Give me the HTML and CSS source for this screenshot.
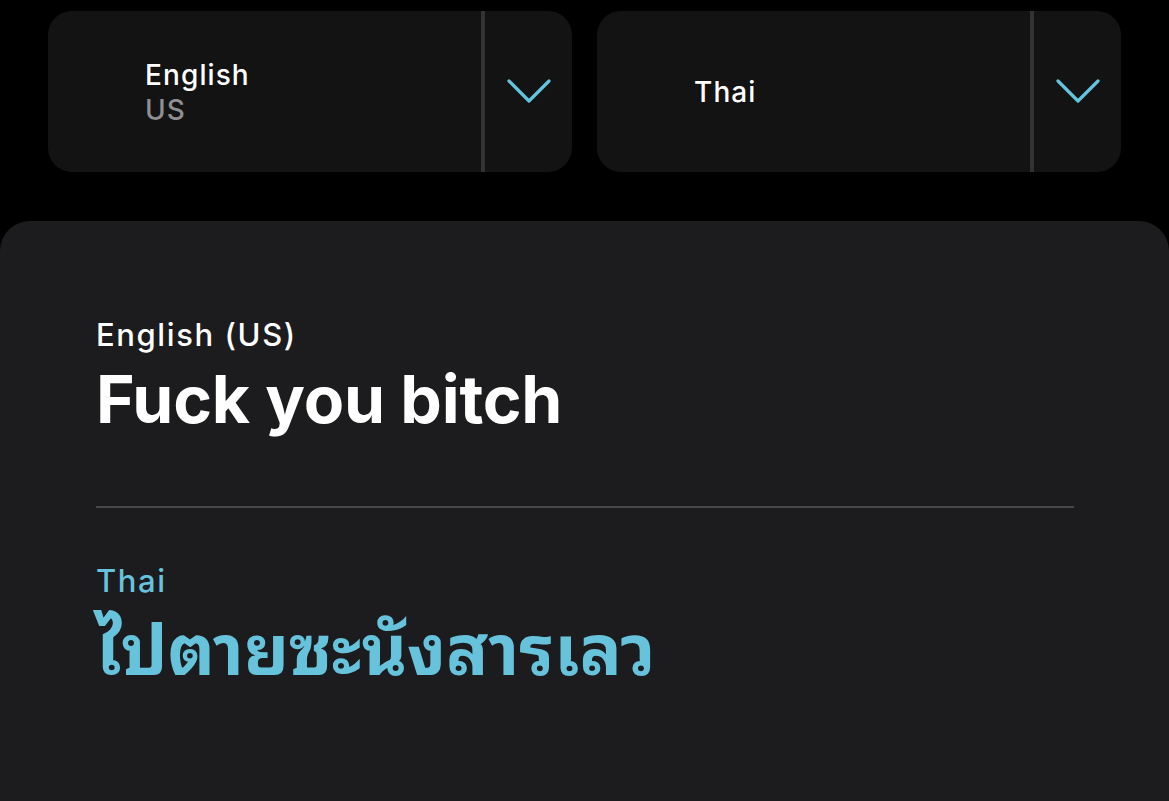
FILE: index.html
```html
<!DOCTYPE html>
<html lang="en">
<head>
<meta charset="utf-8">
<title>Translate</title>
<link rel="stylesheet" href="styles.css">
</head>
<body>
<div class="screen">
  <div class="pickers">
    <div class="picker">
      <div class="picker-label">
        <span class="lang">English</span>
        <span class="region">US</span>
      </div>
      <div class="picker-sep"></div>
      <div class="picker-toggle">
        <svg class="chevron" viewBox="0 0 44 24" width="44" height="24"><path d="M2 2 L22 22 L42 2" fill="none" stroke="currentColor" stroke-width="3.2" stroke-linecap="round" stroke-linejoin="round"/></svg>
      </div>
    </div>
    <div class="picker">
      <div class="picker-label">
        <span class="lang">Thai</span>
      </div>
      <div class="picker-sep"></div>
      <div class="picker-toggle">
        <svg class="chevron" viewBox="0 0 44 24" width="44" height="24"><path d="M2 2 L22 22 L42 2" fill="none" stroke="currentColor" stroke-width="3.2" stroke-linecap="round" stroke-linejoin="round"/></svg>
      </div>
    </div>
  </div>

  <div class="card">
    <div class="block source">
      <div class="block-lang">English (US)</div>
      <div class="block-text">Fuck you bitch</div>
    </div>
    <hr class="rule">
    <div class="block target">
      <div class="block-lang">Thai</div>
      <div class="block-text thai" lang="th">ไปตายซะนังสารเลว</div>
    </div>
  </div>
</div>
</body>
</html>
```
FILE: styles.css
```css
html, body {
  margin: 0;
  padding: 0;
  background: #000;
  height: 100%;
  overflow: hidden;
}

body {
  font-family: Inter, "Noto Sans", sans-serif;
  color: #fff;
}

.screen {
  display: flex;
  flex-direction: column;
  height: 100%;
}

.pickers {
  display: flex;
  gap: 25px;
  padding: 11px 48px 0;
}

.picker {
  flex: 1;
  height: 161px;
  display: flex;
  background: #131313;
  border-radius: 24px;
  overflow: hidden;
}

.picker-label {
  flex: 1;
  display: flex;
  flex-direction: column;
  justify-content: center;
  padding-left: 97px;
  padding-top: 2px;
}

.lang,
.region {
  font-size: 28px;
  font-weight: 500;
  line-height: 35px;
  letter-spacing: 1.1px;
}

.lang {
  color: #fff;
}

.region {
  color: #8e8e93;
}

.picker-sep {
  width: 4px;
  background: #333335;
}

.picker-toggle {
  width: 87px;
  display: flex;
  align-items: center;
  justify-content: center;
  color: #64c3de;
  padding-bottom: 1px;
}

.chevron {
  display: block;
}

.card {
  flex: 1;
  margin-top: 49px;
  background: #1c1c1e;
  border-radius: 30px 30px 0 0;
  padding: 94px 95px 0 96px;
}

.block-lang {
  font-size: 31px;
  font-weight: 500;
  line-height: 40px;
  letter-spacing: 1.6px;
}

.block-text {
  font-size: 66px;
  font-weight: 700;
  line-height: 76px;
  letter-spacing: -0.2px;
}

.source .block-text {
  margin-top: 6px;
}

.rule {
  border: 0;
  height: 2px;
  background: #48484a;
  margin: 69px 0 0;
}

.target {
  margin-top: 53px;
  color: #67c3dc;
}

.block-text.thai {
  font-family: "Noto Sans Thai Looped", "Loma", "Garuda", "Sawasdee", "Umpush", "Waree", "Noto Sans Thai", Inter, sans-serif;
  font-size: 70px;
  font-weight: 700;
  line-height: 86px;
  margin-top: 0;
  letter-spacing: 0;
}
```
